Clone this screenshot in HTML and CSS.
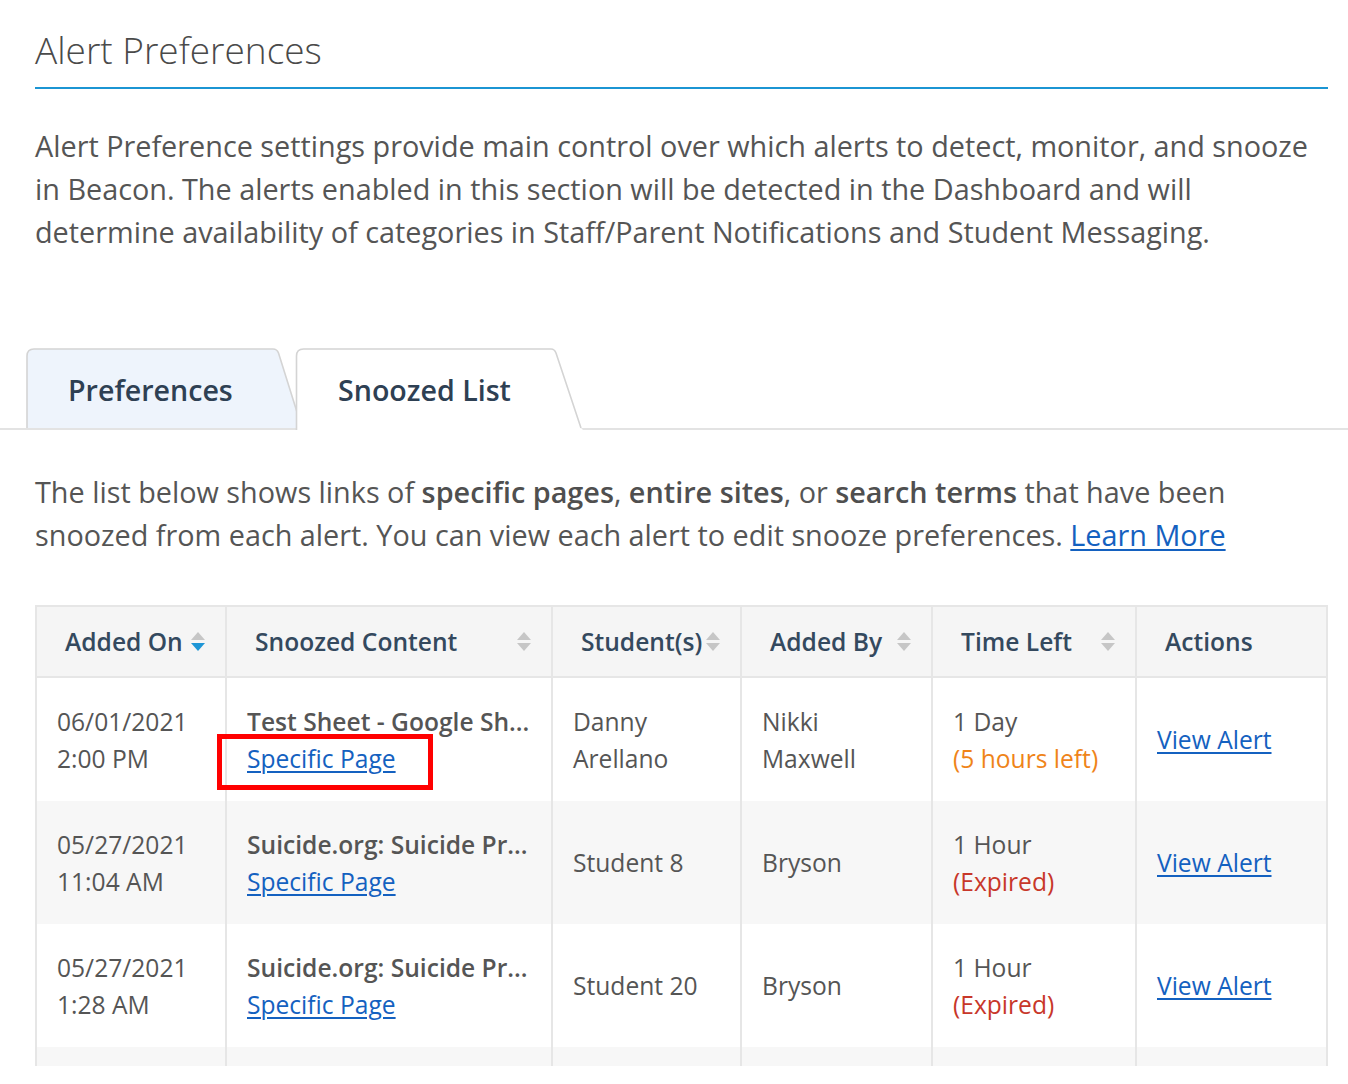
FILE: index.html
```html
<!DOCTYPE html>
<html lang="en">
<head>
<meta charset="utf-8">
<title>Alert Preferences</title>
<link rel="stylesheet" href="styles.css">
</head>
<body>
<div class="page">
  <section class="intro">
    <h1 class="title">Alert Preferences</h1>
    <p class="lead">Alert Preference settings provide main control over which alerts to detect, monitor, and snooze in Beacon. The alerts enabled in this section will be detected in the Dashboard and will determine availability of categories in Staff/Parent Notifications and Student Messaging.</p>
  </section>

  <nav class="tabs">
    <div class="tab tab-prefs">
      <svg class="tab-shape" width="277" height="82" viewBox="0 0 277 82" aria-hidden="true">
        <path d="M1 80 V8 Q1 1 8 1 H247 Q251 1 252.5 5 L276 80 Z" fill="#eef4fc"/>
        <path d="M1 80 V8 Q1 1 8 1 H247 Q251 1 252.5 5 L276 80" fill="none" stroke="#d4d4d4" stroke-width="1.6"/>
      </svg>
      <span class="tab-label">Preferences</span>
    </div>
    <div class="tab tab-snoozed">
      <svg class="tab-shape" width="288" height="82" viewBox="0 0 288 82" aria-hidden="true">
        <path d="M1.5 82 V8 Q1.5 1 8.5 1 H256 Q259.5 1 261 5 L286 80 L288 82 Z" fill="#ffffff"/>
        <path d="M1.5 82 V8 Q1.5 1 8.5 1 H256 Q259.5 1 261 5 L286 80" fill="none" stroke="#d4d4d4" stroke-width="1.6"/>
      </svg>
      <span class="tab-label">Snoozed List</span>
    </div>
  </nav>

  <section class="content">
    <p class="lead lead-list">The list below shows links of <strong>specific pages</strong>, <strong>entire sites</strong>, or <strong>search terms</strong> that have been snoozed from each alert. You can view each alert to edit snooze preferences. <a href="#" class="link">Learn More</a></p>

    <div class="table-clip">
      <table class="snoozed">
        <colgroup>
          <col class="c1"><col class="c2"><col class="c3"><col class="c4"><col class="c5"><col class="c6">
        </colgroup>
        <thead>
          <tr>
            <th><div class="th-in"><span>Added On</span>
              <svg class="sort" width="16" height="24" viewBox="0 0 16 24" aria-hidden="true"><path d="M1 10 L8 2 L15 10 Z" fill="#c6c6c6"/><path d="M1 13 L15 13 L8 21 Z" fill="#1e96d6"/></svg></div></th>
            <th><div class="th-in"><span>Snoozed Content</span>
              <svg class="sort" width="16" height="24" viewBox="0 0 16 24" aria-hidden="true"><path d="M1 10 L8 2 L15 10 Z" fill="#c6c6c6"/><path d="M1 13 L15 13 L8 21 Z" fill="#c6c6c6"/></svg></div></th>
            <th><div class="th-in"><span>Student(s)</span>
              <svg class="sort" width="16" height="24" viewBox="0 0 16 24" aria-hidden="true"><path d="M1 10 L8 2 L15 10 Z" fill="#c6c6c6"/><path d="M1 13 L15 13 L8 21 Z" fill="#c6c6c6"/></svg></div></th>
            <th><div class="th-in"><span>Added By</span>
              <svg class="sort" width="16" height="24" viewBox="0 0 16 24" aria-hidden="true"><path d="M1 10 L8 2 L15 10 Z" fill="#c6c6c6"/><path d="M1 13 L15 13 L8 21 Z" fill="#c6c6c6"/></svg></div></th>
            <th><div class="th-in"><span>Time Left</span>
              <svg class="sort" width="16" height="24" viewBox="0 0 16 24" aria-hidden="true"><path d="M1 10 L8 2 L15 10 Z" fill="#c6c6c6"/><path d="M1 13 L15 13 L8 21 Z" fill="#c6c6c6"/></svg></div></th>
            <th><div class="th-in"><span>Actions</span></div></th>
          </tr>
        </thead>
        <tbody>
          <tr>
            <td>06/01/2021<br>2:00 PM</td>
            <td><span class="item-title">Test Sheet - Google Sh...</span><br><span class="flagged"><a href="#" class="link">Specific Page</a></span></td>
            <td>Danny<br>Arellano</td>
            <td>Nikki<br>Maxwell</td>
            <td>1 Day<br><span class="warn">(5 hours left)</span></td>
            <td><a href="#" class="link">View Alert</a></td>
          </tr>
          <tr>
            <td>05/27/2021<br>11:04 AM</td>
            <td><span class="item-title">Suicide.org: Suicide Pr...</span><br><a href="#" class="link">Specific Page</a></td>
            <td>Student 8</td>
            <td>Bryson</td>
            <td>1 Hour<br><span class="expired">(Expired)</span></td>
            <td><a href="#" class="link">View Alert</a></td>
          </tr>
          <tr>
            <td>05/27/2021<br>1:28 AM</td>
            <td><span class="item-title">Suicide.org: Suicide Pr...</span><br><a href="#" class="link">Specific Page</a></td>
            <td>Student 20</td>
            <td>Bryson</td>
            <td>1 Hour<br><span class="expired">(Expired)</span></td>
            <td><a href="#" class="link">View Alert</a></td>
          </tr>
          <tr class="row-empty">
            <td></td><td></td><td></td><td></td><td></td><td></td>
          </tr>
        </tbody>
      </table>
    </div>
  </section>
</div>
</body>
</html>
```

FILE: styles.css
```css
* { box-sizing: border-box; }

html, body {
  margin: 0;
  padding: 0;
  background: #ffffff;
}

body {
  font-family: "Open Sans", "Noto Sans", "Liberation Sans", sans-serif;
  color: #555555;
  overflow: hidden;
}

.intro,
.content {
  padding: 0 20px 0 35px;
}

.title {
  margin: 0;
  padding: 28px 0 16px;
  font-size: 37px;
  line-height: 43px;
  font-weight: 300;
  color: #4a4a4a;
  border-bottom: 2px solid #1b95d3;
}

.lead {
  margin: 34.5px 0 0;
  font-size: 28.8px;
  line-height: 43px;
  font-weight: 400;
  color: #555555;
}

.lead strong {
  font-weight: 600;
  color: #4f4f4f;
}

.link {
  color: #1461c0;
  text-decoration: underline;
  text-decoration-thickness: 1.5px;
  text-underline-offset: 3px;
}

/* Tabs */
.tabs {
  display: flex;
  margin-top: 95.5px;
  padding-left: 26px;
  height: 82px;
  border-bottom: 2px solid #e3e3e3;
}

.tab {
  position: relative;
  display: flex;
  align-items: center;
  height: 80px;
  font-size: 28.6px;
  font-weight: 600;
  color: #2e4053;
}

.tab-shape {
  position: absolute;
  left: 0;
  top: 0;
  overflow: visible;
}

.tab-label {
  position: relative;
  line-height: 36px;
  margin-top: 4px;
}

.tab-prefs {
  width: 277px;
  padding-left: 42px;
  z-index: 1;
}

.tab-snoozed {
  width: 288px;
  margin-left: -8px;
  padding-left: 43px;
  z-index: 2;
}

.lead-list {
  margin-top: 39.5px;
}

/* Table */
.table-clip {
  margin-top: 49.5px;
  height: 461px;
  overflow: hidden;
}

.snoozed {
  width: 1293px;
  table-layout: fixed;
  border-collapse: separate;
  border-spacing: 0;
  border-top: 2px solid #e6e6e6;
  border-left: 2px solid #e6e6e6;
  border-right: 2px solid #e6e6e6;
  font-size: 24.6px;
  line-height: 37px;
}

.c1 { width: 190px; }
.c2 { width: 326px; }
.c3 { width: 189px; }
.c4 { width: 191px; }
.c5 { width: 204px; }
.c6 { width: 189px; }

.snoozed th,
.snoozed td {
  border-right: 2px solid #e6e6e6;
  vertical-align: middle;
  text-align: left;
}

.snoozed th:last-child,
.snoozed td:last-child {
  border-right: 0;
}

.snoozed th {
  height: 71px;
  padding: 0 19px 0 28px;
  background: #f5f5f5;
  border-bottom: 2px solid #e6e6e6;
  font-weight: 600;
  color: #34495e;
  white-space: nowrap;
}

.th-in {
  display: flex;
  align-items: center;
  justify-content: space-between;
  gap: 3px;
}

.sort {
  flex: none;
  display: block;
}

.snoozed td {
  padding: 24.5px 14px 24.5px 20px;
  height: 123px;
  color: #555555;
  white-space: nowrap;
}

.snoozed tbody tr:nth-child(odd) td { background: #ffffff; }
.snoozed tbody tr:nth-child(even) td { background: #f7f7f7; }

.item-title {
  font-weight: 600;
  color: #555555;
}

.warn { color: #ef8419; }
.expired { color: #c8372a; }

.flagged {
  position: relative;
  display: inline-block;
}

.flagged::after {
  content: "";
  position: absolute;
  left: -30px;
  right: -37px;
  top: -6px;
  bottom: -13px;
  border: 5px solid #ff0000;
  pointer-events: none;
}
```
